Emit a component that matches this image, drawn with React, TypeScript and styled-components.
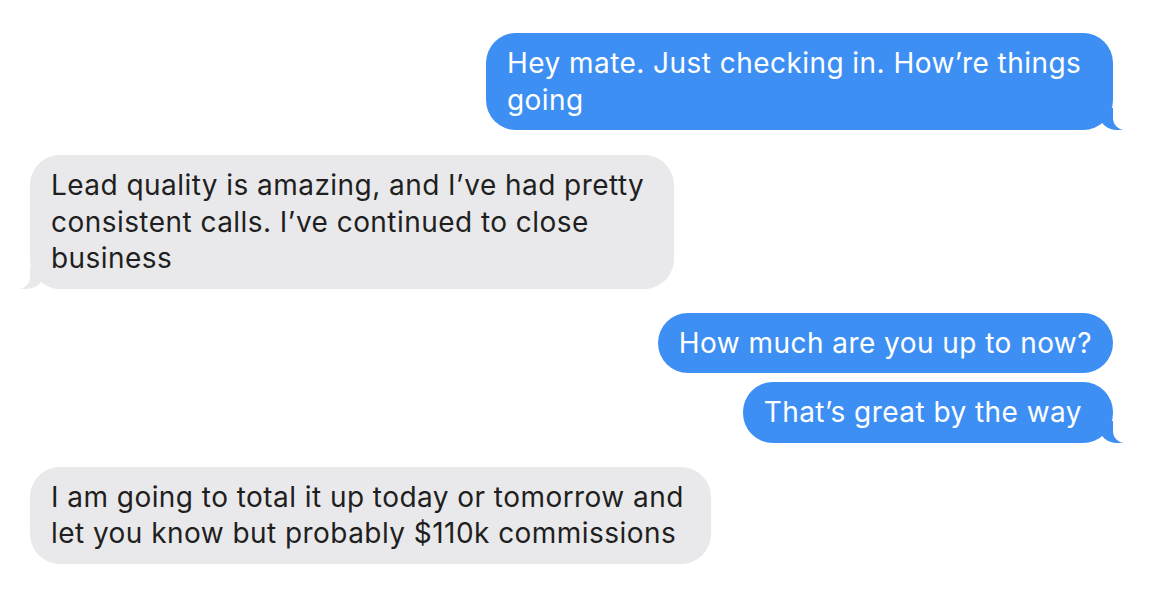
import React from "react";
import styled, { createGlobalStyle, css } from "styled-components";

const Global = createGlobalStyle`
  html, body { margin: 0; padding: 0; background: #ffffff; }
  body { font-family: Inter, "Helvetica Neue", "Liberation Sans", Arial, sans-serif; }
`;

const BLUE = "#3e8ff4";
const GRAY = "#e9e9eb";

const Thread = styled.div`
  display: flex;
  flex-direction: column;
  padding: 33px 45px 0 30px;
  width: 1158px;
  box-sizing: border-box;
`;

const Row = styled.div<{ $me?: boolean; $gap: number }>`
  display: flex;
  justify-content: ${(p) => (p.$me ? "flex-end" : "flex-start")};
  margin-top: ${(p) => p.$gap}px;
`;

const meTail = css`
  padding-right: 31px;
  &::before {
    content: "";
    position: absolute;
    bottom: 0;
    right: -10px;
    width: 24px;
    height: 22px;
    background: ${BLUE};
    border-bottom-left-radius: 18px 16px;
  }
  &::after {
    content: "";
    position: absolute;
    bottom: 0;
    right: -30px;
    width: 30px;
    height: 24px;
    background: #ffffff;
    border-bottom-left-radius: 12px;
  }
`;

const themTail = css`
  &::before {
    content: "";
    position: absolute;
    bottom: 0;
    left: -10px;
    width: 24px;
    height: 22px;
    background: ${GRAY};
    border-bottom-right-radius: 18px 16px;
  }
  &::after {
    content: "";
    position: absolute;
    bottom: 0;
    left: -30px;
    width: 30px;
    height: 24px;
    background: #ffffff;
    border-bottom-right-radius: 12px;
  }
`;

const Bubble = styled.div<{ $me?: boolean; $w?: number; $tail?: boolean }>`
  position: relative;
  box-sizing: border-box;
  ${(p) => (p.$w ? `width: ${p.$w}px;` : "")}
  padding: 12px 21px;
  border-radius: 30px;
  font-size: 28px;
  line-height: 36.5px;
  letter-spacing: 0.45px;
  white-space: nowrap;
  background: ${(p) => (p.$me ? BLUE : GRAY)};
  color: ${(p) => (p.$me ? "#ffffff" : "#1f1f21")};
  ${(p) => (p.$tail ? (p.$me ? meTail : themTail) : "")}
`;

export default function App() {
  return (
    <>
      <Global />
      <Thread>
        <Row $me $gap={0}>
          <Bubble $me $tail $w={627}>
            Hey mate. Just checking in. How’re things
            <br />
            going
          </Bubble>
        </Row>
        <Row $gap={25}>
          <Bubble $tail $w={644}>
            Lead quality is amazing, and I’ve had pretty
            <br />
            consistent calls. I’ve continued to close
            <br />
            business
          </Bubble>
        </Row>
        <Row $me $gap={24}>
          <Bubble $me>How much are you up to now?</Bubble>
        </Row>
        <Row $me $gap={9}>
          <Bubble $me $tail>That’s great by the way</Bubble>
        </Row>
        <Row $gap={24}>
          <Bubble $w={681}>
            I am going to total it up today or tomorrow and
            <br />
            let you know but probably $110k commissions
          </Bubble>
        </Row>
      </Thread>
    </>
  );
}
